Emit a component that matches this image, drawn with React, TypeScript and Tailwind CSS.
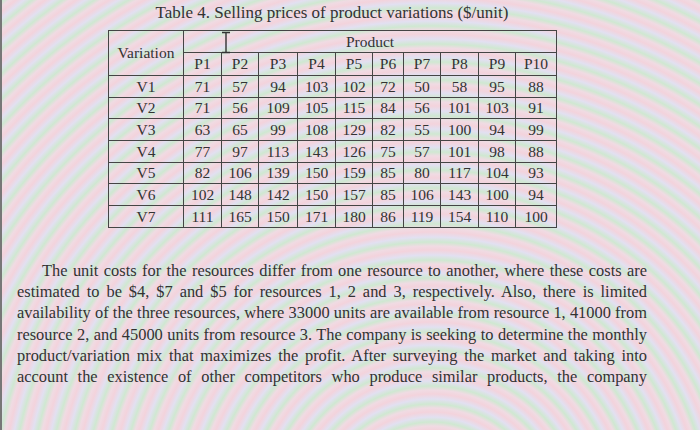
import React from "react";

const serif = "font-['Liberation_Serif','Times_New_Roman',serif]";

const colWidths = [75, 38, 37, 39, 38, 37, 31, 37, 38, 37, 41];
const products = ["P1", "P2", "P3", "P4", "P5", "P6", "P7", "P8", "P9", "P10"];

const rows: { name: string; prices: number[] }[] = [
  { name: "V1", prices: [71, 57, 94, 103, 102, 72, 50, 58, 95, 88] },
  { name: "V2", prices: [71, 56, 109, 105, 115, 84, 56, 101, 103, 91] },
  { name: "V3", prices: [63, 65, 99, 108, 129, 82, 55, 100, 94, 99] },
  { name: "V4", prices: [77, 97, 113, 143, 126, 75, 57, 101, 98, 88] },
  { name: "V5", prices: [82, 106, 139, 150, 159, 85, 80, 117, 104, 93] },
  { name: "V6", prices: [102, 148, 142, 150, 157, 85, 106, 143, 100, 94] },
  { name: "V7", prices: [111, 165, 150, 171, 180, 86, 119, 154, 110, 100] },
];

const paragraph = [
  "The unit costs for the resources differ from one resource to another, where these costs are",
  "estimated to be $4, $7 and $5 for resources 1, 2 and 3, respectively. Also, there is limited",
  "availability of the three resources, where 33000 units are available from resource 1, 41000 from",
  "resource 2, and 45000 units from resource 3. The company is seeking to determine the monthly",
  "product/variation mix that maximizes the profit. After surveying the market and taking into",
  "account the existence of other competitors who produce similar products, the company",
];

const cell = "border border-[#454545] text-center align-middle p-0";

function PriceTable() {
  return (
    <table className="table-fixed border-collapse w-[448px] ml-[108px] mt-[7px] text-[15.5px] leading-none text-[#333]">
      <colgroup>
        {colWidths.map((w, i) => (
          <col key={i} style={{ width: w }} />
        ))}
      </colgroup>
      <thead>
        <tr className="h-[22px]">
          <th rowSpan={2} className={`${cell} font-normal`}>
            Variation
          </th>
          <th colSpan={10} className={`${cell} font-normal`}>
            Product
          </th>
        </tr>
        <tr className="h-[23px]">
          {products.map((p) => (
            <th key={p} className={`${cell} font-normal`}>
              {p}
            </th>
          ))}
        </tr>
      </thead>
      <tbody>
        {rows.map((r) => (
          <tr key={r.name} className="h-[21.7px]">
            <td className={cell}>{r.name}</td>
            {r.prices.map((v, i) => (
              <td key={i} className={cell}>
                {v}
              </td>
            ))}
          </tr>
        ))}
      </tbody>
    </table>
  );
}

export default function App() {
  return (
    <div
      className={`${serif} relative w-[700px] h-[430px] overflow-hidden border-l-2 border-[#777] bg-[#e9e6ec] bg-[repeating-radial-gradient(circle_at_430px_520px,#f3d3dc_0px,#f0dbe3_4px,#cfe8d1_8px,#e2e0f1_13px,#f3d3dc_18px)]`}
    >
      <div className="flex flex-col -ml-[2px]">
        <h1 className="w-[448px] ml-[108px] pt-[3px] text-center text-[17px] leading-[20px] font-normal text-[#333]">
          Table 4. Selling prices of product variations ($/unit)
        </h1>
        <PriceTable />
        <div className="mt-[32px] ml-[17px] w-[630px] text-[16.4px] leading-[21.3px] text-[#333]">
          {paragraph.map((line, i) => (
            <div
              key={i}
              className={`text-justify [text-align-last:justify] whitespace-nowrap ${i === 0 ? "pl-[25px]" : ""}`}
            >
              {line}
            </div>
          ))}
        </div>
      </div>

      {/* text cursor caught in the photo */}
      <svg className="absolute left-[219px] top-[31px]" width="10" height="23" viewBox="0 0 10 23">
        <path d="M1 1.5h8M5 1.5v20M1 21.5h8" stroke="#333" strokeWidth="1.4" fill="none" />
      </svg>
    </div>
  );
}
